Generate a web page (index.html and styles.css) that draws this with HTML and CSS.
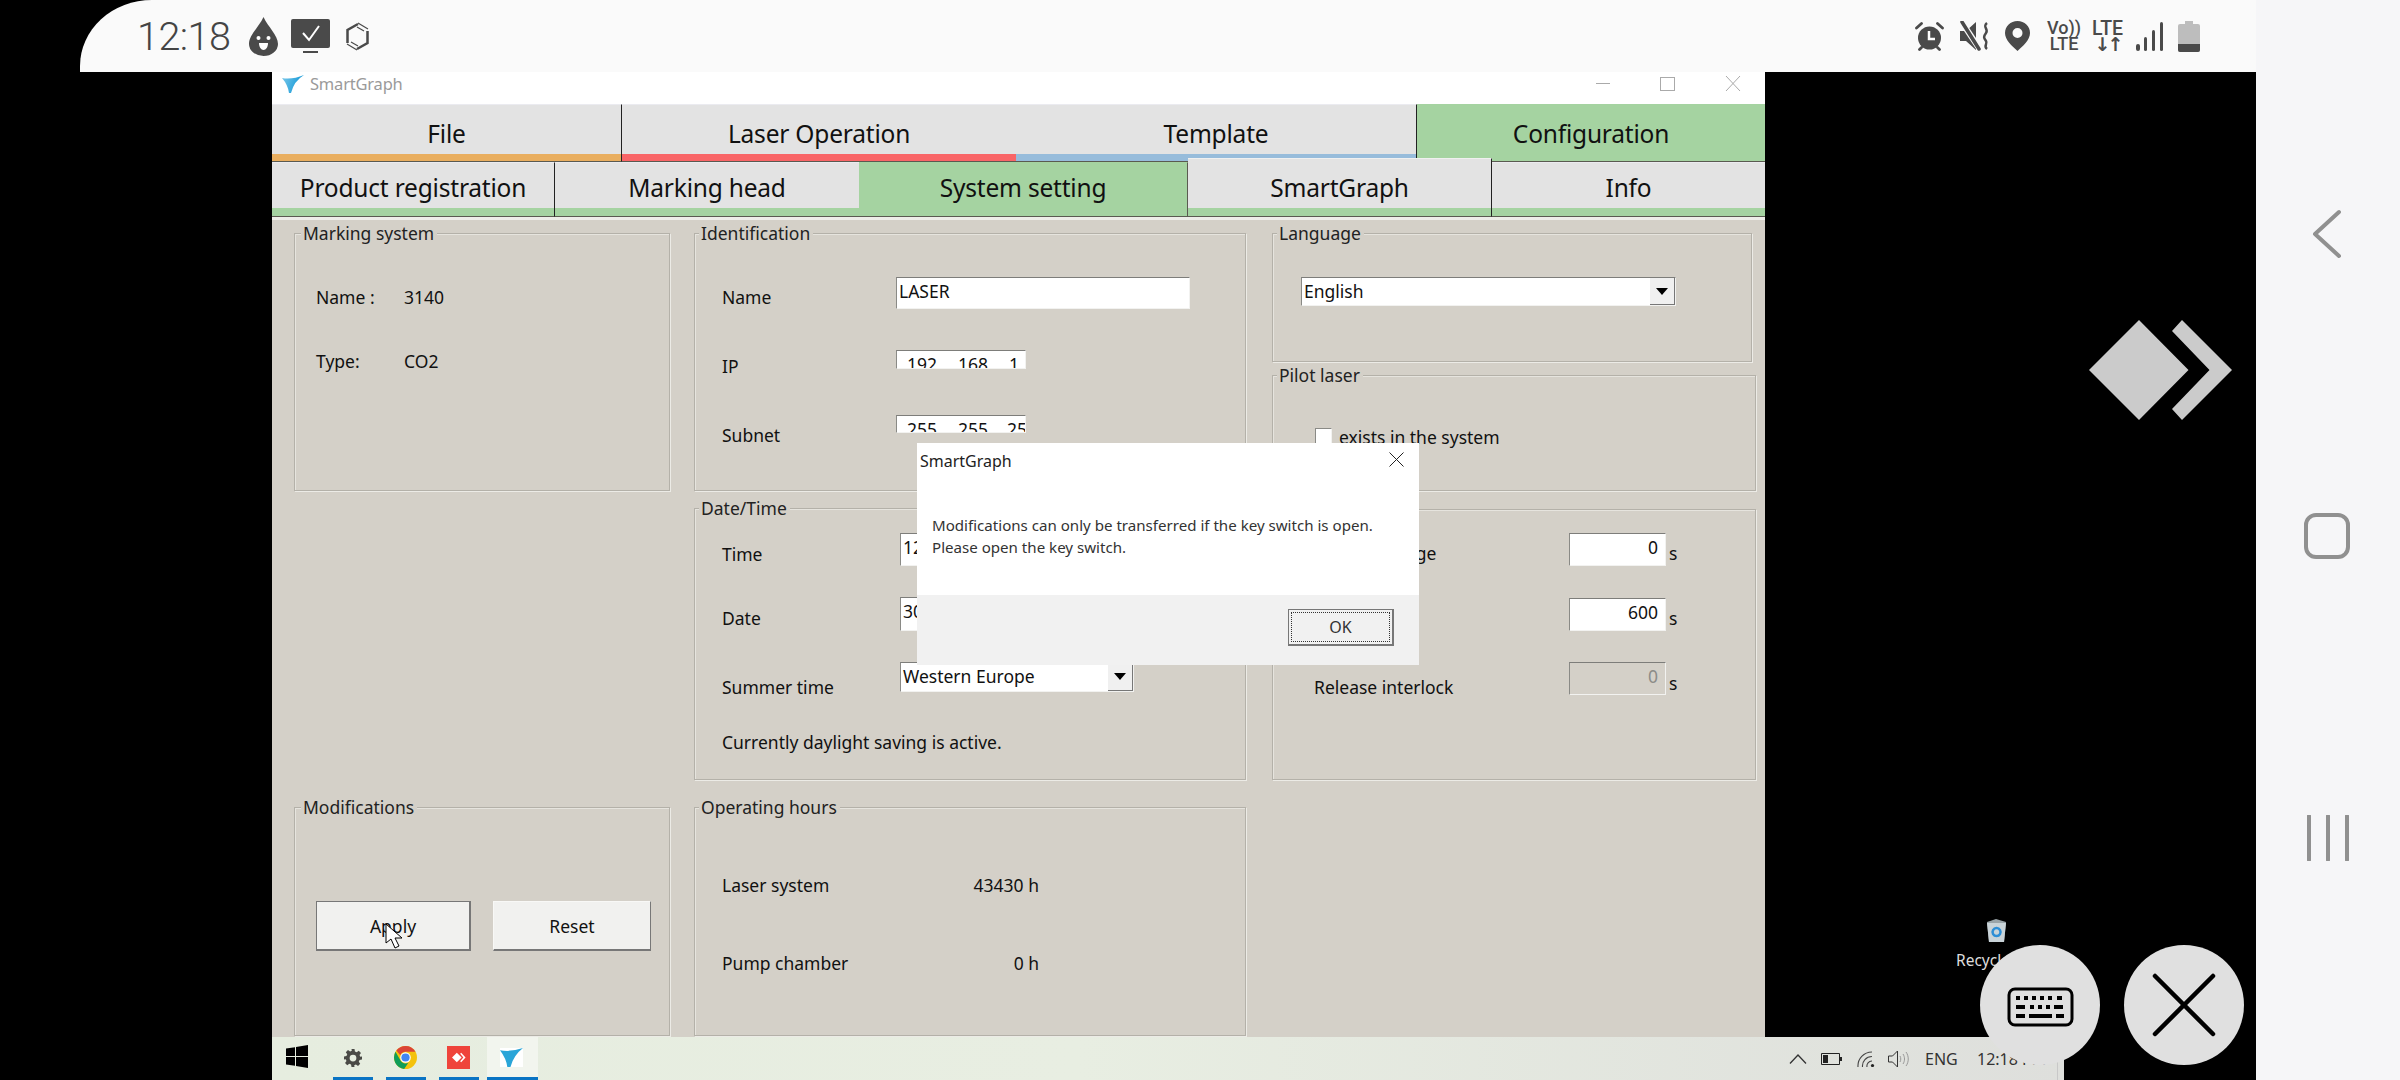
FILE: index.html
```html
<!DOCTYPE html>
<html lang="en">
<head>
<meta charset="utf-8">
<title>SmartGraph</title>
<link rel="stylesheet" href="styles.css">
</head>
<body>
<div class="screen">
  <div class="main">
    <header class="statusbar">
      <span class="clock">12:18</span>
      <svg class="si si-drop" viewBox="0 0 29 39"><path d="M14.5 0C19 10 29 18 29 27A14.5 12 0 0 1 0 27C0 18 10 10 14.5 0z" fill="#4a4a4a"/><circle cx="9.5" cy="21" r="2" fill="#fff"/><circle cx="19.5" cy="21" r="2" fill="#fff"/><path d="M10 26h9c0 4-2 7-4.500 7S10 30 10 26z" fill="#fff"/></svg>
      <svg class="si si-mon" viewBox="0 0 39 35"><rect width="39" height="29" rx="2" fill="#4a4a4a"/><path d="M12 14l6 7 10-14" fill="none" stroke="#fff" stroke-width="2"/><rect x="12" y="32" width="15" height="2" fill="#4a4a4a"/></svg>
      <svg class="si si-hex" viewBox="0 0 25 29"><g fill="none" stroke="#4a4a4a"><path d="M2.500 21V8L13 2" stroke-width="2.500"/><path d="M22.500 9V21L12 27" stroke-width="2.500"/><path d="M13 1l10 6M12 5l7 4M2 22l10 6M6 20l7 4" stroke-width="1.200"/></g></svg>
      <div class="status-right">
        <svg class="si si-alarm" viewBox="0 0 29 29"><circle cx="14.500" cy="16" r="11.500" fill="#4a4a4a"/><path d="M1.500 6l5-4.500M27.500 6l-5-4.500M4.500 27.500l2-2M24.500 27.500l-2-2" stroke="#4a4a4a" stroke-width="2.800" stroke-linecap="round"/><path d="M14 9v8h6" fill="none" stroke="#fff" stroke-width="2.500"/></svg>
        <svg class="si si-mute" viewBox="0 0 30 30"><path d="M0 10h6l10-9v28L6 20H0z" fill="#4a4a4a"/><path d="M1 0l20 30" stroke="#fafafa" stroke-width="6"/><path d="M2 1l17 27" stroke="#4a4a4a" stroke-width="3.500" stroke-linecap="round"/><path d="M27 2c-5 4 2 6-1 10s-2 5 0 8-3 5 1 8" fill="none" stroke="#4a4a4a" stroke-width="2.500"/></svg>
        <svg class="si si-pin" viewBox="0 0 25 30"><path fill-rule="evenodd" d="M12.500 0C19.500 0 25 5 25 12c0 7-7 13-12.500 18C7 25 0 19 0 12 0 5 5.500 0 12.500 0zM12.500 7a5 5 0 1 0 0 10 5 5 0 0 0 0-10z" fill="#4a4a4a"/></svg>
        <div class="net net-volte"><span>Vo))</span><span>LTE</span></div>
        <div class="net net-lte"><span>LTE</span><span class="arrows">↓↑</span></div>
        <svg class="si si-signal" viewBox="0 0 27 29"><g fill="#4a4a4a"><rect y="22" width="4" height="7" rx="2"/><rect x="8" y="15" width="3" height="14" rx="1.500"/><rect x="16" y="8" width="3" height="21" rx="1.500"/><rect x="24" y="0" width="3" height="29" rx="1.500"/></g></svg>
        <svg class="si si-batt" viewBox="0 0 22 31"><path d="M7 0h8v3h5a2 2 0 0 1 2 2v24a2 2 0 0 1-2 2H2a2 2 0 0 1-2-2V5a2 2 0 0 1 2-2h5z" fill="#bdbdbd"/><path d="M0 23h22v6a2 2 0 0 1-2 2H2a2 2 0 0 1-2-2z" fill="#4a4a4a"/></svg>
      </div>
    </header>

    <div class="desktop">
      <section class="window">
        <div class="titlebar">
          <svg class="app-icon" viewBox="0 0 22 18"><defs><linearGradient id="fun" x1="0" y1="0" x2="1" y2="0.300"><stop offset="0" stop-color="#7cc8ea"/><stop offset="1" stop-color="#0f97d6"/></linearGradient></defs><path d="M0 3Q10 5 22 0 12 6 9 18H7Q6 10 0 3z" fill="url(#fun)"/></svg>
          <span class="app-name">SmartGraph</span>
          <div class="win-controls">
            <span class="wc-min"></span>
            <span class="wc-max"></span>
            <svg class="wc-close" viewBox="0 0 16 15"><path d="M1 0l14 15M15 0L1 15" stroke="#aaa" stroke-width="1" fill="none"/></svg>
          </div>
        </div>

        <nav class="tabs tabs-top">
          <div class="tab tab-orange tab-sep">File</div>
          <div class="tab tab-red">Laser Operation</div>
          <div class="tab tab-blue tab-sep">Template</div>
          <div class="tab tab-on">Configuration</div>
        </nav>
        <nav class="tabs tabs-sub">
          <div class="tab tab-green tab-sep">Product registration</div>
          <div class="tab tab-green">Marking head</div>
          <div class="tab tab-on">System setting</div>
          <div class="tab tab-green tab-raised">SmartGraph</div>
          <div class="tab tab-green">Info</div>
        </nav>

        <div class="panes">
          <div class="col col-left">
            <div class="group g-marking">
              <span class="legend">Marking system</span>
              <div class="kv mt33"><span class="kv-k">Name :</span><span>3140</span></div>
              <div class="kv mt24"><span class="kv-k">Type:</span><span>CO2</span></div>
            </div>
            <div class="group g-mod">
              <span class="legend">Modifications</span>
              <div class="btn-row">
                <div class="btn btn-apply">Apply</div>
                <div class="btn btn-reset">Reset</div>
              </div>
            </div>
          </div>

          <div class="col col-mid">
            <div class="group g-ident">
              <span class="legend">Identification</span>
              <div class="row mt33"><span class="lbl lbl-a">Name</span><div class="field f-name">LASER</div></div>
              <div class="row mt29"><span class="lbl lbl-a">IP</span><div class="field f-ip off4"><span>192</span><span>168</span><span>1</span></div></div>
              <div class="row mt29"><span class="lbl lbl-a">Subnet</span><div class="field f-ip f-sub"><span>255</span><span>255</span><span>25</span></div></div>
            </div>
            <div class="group g-date">
              <span class="legend">Date/Time</span>
              <div class="row mt15"><span class="lbl lbl-b">Time</span><div class="field f-time offm1">12:18:00</div></div>
              <div class="row mt24"><span class="lbl lbl-b">Date</span><div class="field f-date offm1">30.08.2021</div></div>
              <div class="row mt29"><span class="lbl lbl-b">Summer time</span><div class="select s-summer offm5"><span class="sel-text">Western Europe</span><span class="sel-btn"></span></div></div>
              <div class="plain mt15">Currently daylight saving is active.</div>
            </div>
            <div class="group g-hours">
              <span class="legend">Operating hours</span>
              <div class="hours mt47"><span>Laser system</span><span>43430 h</span></div>
              <div class="hours mt38"><span>Pump chamber</span><span>0 h</span></div>
            </div>
          </div>

          <div class="col col-right">
            <div class="group g-lang">
              <span class="legend">Language</span>
              <div class="select s-lang mt33"><span class="sel-text">English</span><span class="sel-btn"></span></div>
            </div>
            <div class="group g-pilot">
              <span class="legend">Pilot laser</span>
              <div class="check mt31"><span class="box"></span><span>exists in the system</span></div>
            </div>
            <div class="group g-times">
              <span class="legend">Times</span>
              <div class="row mt13"><span class="lbl lbl-c">Laser recharge</span><div class="field f-num">0</div><span class="unit">s</span></div>
              <div class="row mt25"><span class="lbl lbl-c">Standby</span><div class="field f-num">600</div><span class="unit">s</span></div>
              <div class="row mt29"><span class="lbl lbl-c">Release interlock</span><div class="field f-num f-off offm5">0</div><span class="unit offm4">s</span></div>
            </div>
          </div>
        </div>

        <svg class="pointer" viewBox="0 0 18 26"><path d="M1 1v19l5-4 4 9 4-2-4-8h7z" fill="#fff" stroke="#000" stroke-width="1"/></svg>
      </section>

      <footer class="taskbar">
        <div class="start">
          <svg class="tb-win" viewBox="0 0 22 23"><path d="M0 3.500l9-1.300V11H0zM10 2l12-2v11H10zM0 12h9v8.800l-9-1.300zM10 12h12v11l-12-2z" fill="#000"/></svg>
        </div>
        <div class="tile t-gear">
          <svg class="tb-ic18" viewBox="0 0 24 24"><path fill="#4a4a46" fill-rule="evenodd" d="M10 0h4l.6 3.300 2.300 1 2.800-1.900 2.900 2.900-1.900 2.800 1 2.300L24 10v4l-3.300.6-1 2.300 1.900 2.800-2.900 2.900-2.800-1.900-2.300 1L14 24h-4l-.6-3.300-2.300-1-2.800 1.900-2.900-2.900 1.900-2.800-1-2.300L0 14v-4l3.300-.6 1-2.300-1.900-2.800 2.900-2.900 2.800 1.900 2.300-1zM12 7.500a4.500 4.500 0 1 0 0 9 4.500 4.500 0 0 0 0-9z"/></svg>
        </div>
        <div class="tile t-chrome">
          <svg class="tb-ic23" viewBox="0 0 24 24"><circle cx="12" cy="12" r="12" fill="#f4c20d"/><path d="M12 0a12 12 0 0 1 10.400 6H12a6 6 0 0 0-5.500 3.700L2.500 4.800A12 12 0 0 1 12 0z" fill="#db4437"/><path d="M1.600 6a12 12 0 0 0 9 17.900l4.400-6.300a6 6 0 0 1-8.200-2.600z" fill="#0f9d58"/><circle cx="12" cy="12" r="5.500" fill="#fff"/><circle cx="12" cy="12" r="4.300" fill="#4285f4"/></svg>
        </div>
        <div class="tile t-any">
          <span class="any-square"><svg class="tb-ic14" viewBox="0 0 16 12"><path d="M5.500 0.500L11 6l-5.500 5.500L0 6zM10.500.5l5 5.500-5 5.500-1.200-1.200L13 6 9.300 1.700z" fill="#fff"/></svg></span>
        </div>
        <div class="tile t-sg">
          <span class="sg-paper"><svg class="tb-sg" viewBox="0 0 22 18"><path d="M0 2Q10 4 22 0 13 7 10 18H7Q6 10 0 2z" fill="#2aa5d8"/></svg></span>
        </div>
        <div class="tray">
          <svg class="tr-up" viewBox="0 0 18 10"><path d="M1 9.500L9 1l8 8.500" fill="none" stroke="#333" stroke-width="1.300"/></svg>
          <svg class="tr-batt" viewBox="0 0 21 12"><path d="M.5.500h18v11H.5z" fill="none" stroke="#222"/><rect x="19" y="4" width="2" height="4" fill="#222"/><rect x="2" y="2" width="5" height="8" fill="#222"/></svg>
          <svg class="tr-wifi" viewBox="0 0 18 17"><path d="M1 17A14 14 0 0 1 15 2M5.500 17A9.500 9.500 0 0 1 15 6.500M10 17A5 5 0 0 1 15 11" fill="none" stroke="#444" stroke-width="1.100"/><circle cx="15.500" cy="15.500" r="1.600" fill="#222"/></svg>
          <svg class="tr-vol" viewBox="0 0 22 18"><path d="M.5 6h4l5-5v16l-5-5h-4z" fill="none" stroke="#333"/><path d="M12 6c1 2 1 4 0 6M15 4c2 3 2 7 0 10M18 2c3 4 3 10 0 14" fill="none" stroke="#999"/></svg>
          <span class="tr-lang">ENG</span>
          <span class="tr-time">12:18 PM</span>
          <span class="tr-show"></span>
        </div>
      </footer>

      <div class="recycle">
        <svg class="bin" viewBox="0 0 21 24"><path d="M1 3l9-3 10 3-2 20H3z" fill="#9aa4a8"/><path d="M1 4l19 0-2 19H3z" fill="#c9d3d8"/><path d="M10.500 9a4 4 0 1 0 .1 0z" fill="none" stroke="#2d8ed6" stroke-width="2.500"/></svg>
        <span>Recycle Bin</span>
      </div>

      <svg class="any-logo" viewBox="0 0 144 100"><path d="M50 0l49.500 50L50 100 0 50zM93 0l50 50-50 50-10-11 37.500-39L83 11z" fill="#cbcbcb"/></svg>

      <div class="fab fab-kb">
        <svg class="kb" viewBox="0 0 67 40">
          <rect x="2" y="2" width="63" height="36" rx="6" fill="none" stroke="#000" stroke-width="3"/>
          <g fill="#000">
            <rect x="9" y="9" width="4" height="4"/><rect x="17" y="9" width="4" height="4"/><rect x="25" y="9" width="4" height="4"/><rect x="33" y="9" width="4" height="4"/><rect x="41" y="9" width="4" height="4"/><rect x="50" y="9" width="5" height="4"/>
            <rect x="9" y="18" width="9" height="4"/><rect x="23" y="18" width="4" height="4"/><rect x="31" y="18" width="4" height="4"/><rect x="39" y="18" width="4" height="4"/><rect x="47" y="18" width="9" height="4"/>
            <rect x="9" y="27" width="9" height="4"/><rect x="22" y="27" width="23" height="4"/><rect x="49" y="27" width="8" height="4"/>
          </g>
        </svg>
      </div>
      <div class="fab fab-x">
        <svg class="xmark" viewBox="0 0 64 64"><path d="M3 3l58 58M61 3L3 61" stroke="#000" stroke-width="4.500" stroke-linecap="round"/></svg>
      </div>

      <div class="dialog">
        <div class="dlg-head">
          <span>SmartGraph</span>
          <svg class="dlg-close" viewBox="0 0 15 15"><path d="M.5.500l14 14M14.500.500l-14 14" stroke="#222" stroke-width="1" fill="none"/></svg>
        </div>
        <div class="dlg-msg">Modifications can only be transferred if the key switch is open.<br>Please open the key switch.</div>
        <div class="dlg-foot"><div class="dlg-ok"><span>OK</span></div></div>
      </div>
    </div>
  </div>

  <aside class="navbar">
    <svg class="nav-back" viewBox="0 0 30 50"><path d="M27 3L3 25l24 22" fill="none" stroke="#909090" stroke-width="4" stroke-linecap="round" stroke-linejoin="round"/></svg>
    <span class="nav-home"></span>
    <svg class="nav-recent" viewBox="0 0 44 46"><path d="M3 1v44M22 1v44M41 1v44" stroke="#909090" stroke-width="4" stroke-linecap="round"/></svg>
  </aside>
</div>
</body>
</html>
```

FILE: styles.css
```css
* { box-sizing: border-box; }
html, body { margin: 0; padding: 0; background: #000; }
body { font-family: "Noto Sans", "Open Sans", sans-serif; font-size: 18px; color: #111; }

.screen { width: 2400px; height: 1080px; display: grid; grid-template-columns: 2256px 144px; background: #000; overflow: hidden; }
.main { display: flex; flex-direction: column; height: 1080px; }

/* Android status bar */
.statusbar { height: 72px; margin-left: 80px; background: #fafafa; border-top-left-radius: 72px 66px; display: flex; align-items: center; padding-left: 57px; color: #4a4a4a; }
.clock { font-family: Roboto, sans-serif; font-weight: 300; font-size: 39.500px; width: 112px; letter-spacing: -0.5px; color: #444; }
.si { display: block; flex: none; }
.si-drop { width: 29px; height: 39px; margin-right: 13px; }
.si-mon { width: 39px; height: 35px; margin-right: 15px; }
.si-hex { width: 25px; height: 29px; }
.status-right { margin-left: auto; display: flex; align-items: center; padding-right: 56px; }
.si-alarm { width: 29px; height: 29px; margin-right: 16px; }
.si-mute { width: 30px; height: 30px; margin-right: 15px; }
.si-pin { width: 25px; height: 30px; margin-right: 18px; }
.net { display: flex; flex-direction: column; align-items: center; font-family: Roboto, sans-serif; font-weight: 500; font-size: 18px; line-height: 16px; color: #4a4a4a; }
.net-volte { width: 32px; margin-right: 11px; }
.net-lte { width: 33px; margin-right: 12px; font-size: 19.500px; }
.arrows { font-size: 19px; line-height: 14px; font-family: "DejaVu Sans", sans-serif; font-weight: 700; letter-spacing: -3px; }
.si-signal { width: 27px; height: 29px; margin-right: 15px; }
.si-batt { width: 22px; height: 31px; }

/* Android nav bar */
.navbar { background: #f6f6f8; display: flex; flex-direction: column; align-items: center; padding-top: 209px; }
.nav-back { width: 30px; height: 50px; margin-left: -3px; }
.nav-home { width: 46px; height: 46px; border: 4px solid #909090; border-radius: 12px; margin-top: 254px; margin-left: -2px; }
.nav-recent { width: 44px; height: 46px; margin-top: 256px; }

/* Desktop canvas */
.desktop { flex: 1; position: relative; display: flex; flex-direction: column; }

.window { position: relative; margin-left: 272px; width: 1493px; height: 965px; display: flex; flex-direction: column; background: #d4d0c8; }
.titlebar { height: 32px; flex: none; background: #fff; display: flex; align-items: center; padding: 0 0 9px 10px; }
.app-icon { width: 22px; height: 18px; margin-right: 6px; }
.app-name { font-size: 16.500px; color: #9a9a9a; letter-spacing: -0.2px; }
.win-controls { margin-left: auto; display: flex; align-items: center; padding-right: 24px; }
.wc-min { width: 14px; height: 1px; background: #aaa; }
.wc-max { width: 15px; height: 14px; border: 1px solid #aaa; margin-left: 50px; }
.wc-close { width: 16px; height: 15px; margin-left: 50px; }

.tabs { display: grid; flex: none; background: #e3e3e3; }
.tabs-top { grid-template-columns: 350px 394px 401px 348px; height: 58px; }
.tabs-sub { grid-template-columns: 283px 304px 329px 304px 273px; height: 58px; border-bottom: 3px solid #eeeee8; }
.tab { display: flex; align-items: center; justify-content: center; background: #e3e3e3; color: #111; font-size: 24.500px; border-top: 1px solid #ebebf0; border-bottom: 1px solid #5a5a50; letter-spacing: -0.2px; }
.tabs-top .tab { padding-top: 4px; padding-bottom: 3px; box-shadow: inset 0 -7px 0 var(--strip); }
.tabs-sub .tab { padding-bottom: 5px; box-shadow: inset 0 -8px 0 var(--strip); }
.tab-orange { --strip: #e9ae5f; }
.tab-red { --strip: #f96567; }
.tab-blue { --strip: #97bcdb; }
.tab-green { --strip: #a5d3a1; }
.tab-on { --strip: #a5d3a1; background: #a5d3a1; border-top-color: #a5d3a1; }
.tab-sep { border-right: 1px solid #222; }
.tabs-sub .tab-on { border-right: 1px solid #5a5a50; }
.tabs-sub .tab-raised { margin-top: -4px; padding-top: 4px; position: relative; border-right: 1px solid #222; border-top-color: #f0f0f0; }

.panes { flex: 1; min-height: 0; display: grid; grid-template-columns: 376px 552px 486px; column-gap: 24px; padding: 13px 0 1px 22px; background: #d4d0c8; }
.col-right { margin-left: 2px; }
.col { display: flex; flex-direction: column; }
.col-left { justify-content: space-between; }

.group { border: 1px solid #b4b1a9; box-shadow: 1px 1px 0 #ecebe6, inset 1px 1px 0 #e6e4de; padding: 0 21px; flex: none; }
.legend { display: block; width: fit-content; margin: -12px 0 0 -15px; padding: 0 3px 0 2px; background: #d4d0c8; font-size: 17.500px; line-height: 22px; color: #222; position: relative; }
.g-marking { height: 258px; }
.g-mod { height: 229px; }
.g-ident { height: 258px; padding-left: 27px; }
.g-date { height: 272px; margin-top: 17px; padding-left: 27px; }
.g-hours { height: 229px; margin-top: 27px; padding-left: 27px; }
.g-lang { height: 129px; width: 480px; padding-left: 28px; }
.g-pilot { height: 116px; margin-top: 13px; padding-left: 28px; }
.g-times { height: 271px; margin-top: 18px; padding-left: 41px; }
.g-ident .legend, .g-date .legend, .g-hours .legend { margin-left: -23px; }
.g-lang .legend, .g-pilot .legend { margin-left: -24px; }
.g-times .legend { margin-left: -37px; }

.mt13 { margin-top: 13px; } .mt15 { margin-top: 15px; } .mt24 { margin-top: 24px; } .mt25 { margin-top: 25px; }
.mt29 { margin-top: 29px; } .mt31 { margin-top: 31px; } .mt33 { margin-top: 33px; } .mt38 { margin-top: 38px; } .mt47 { margin-top: 47px; }
.off4 { margin-top: 4px; } .offm1 { margin-top: -1px; } .offm4 { margin-top: -4px; } .offm5 { margin-top: -5px; }

.kv { display: flex; height: 40px; line-height: 40px; font-size: 17.500px; }
.kv-k { width: 88px; }
.row { display: flex; align-items: flex-start; height: 40px; font-size: 17.500px; }
.lbl { line-height: 40px; flex: none; }
.lbl-a { width: 174px; }
.lbl-b { width: 178px; }
.lbl-c { width: 255px; white-space: nowrap; }
.plain { line-height: 40px; font-size: 17.500px; }

.field { background: #fff; border: 1px solid #f2f2f0; border-top-color: #7d7d7a; border-left-color: #8a8a86; line-height: 26px; padding: 0 0 0 2px; overflow: hidden; flex: none; }
.f-name { width: 294px; height: 32px; }
.f-ip { width: 130px; height: 19px; display: flex; padding-left: 10px; }
.f-ip span { width: 51px; flex: none; }
.f-sub { height: 18px; }
.f-sub span:nth-child(2) { width: 49px; }
.f-time { width: 130px; height: 33px; }
.f-date { width: 130px; height: 34px; }
.f-num { width: 97px; height: 33px; text-align: right; padding-right: 7px; }
.f-off { background: #d4d0c8; color: #8c8c88; }
.unit { margin-left: 3px; line-height: 40px; }

.select { display: flex; background: #fff; border: 1px solid #f2f2f0; border-top-color: #7d7d7a; border-left-color: #8a8a86; flex: none; }
.s-lang { width: 375px; height: 29px; }
.s-summer { width: 234px; height: 30px; }
.sel-text { flex: 1; line-height: 27px; padding-left: 2px; font-size: 17.500px; }
.sel-btn { width: 25px; background: #f0f0f0; border-right: 1px solid #777; border-bottom: 1px solid #777; display: flex; align-items: center; justify-content: center; }
.sel-btn::before { content: ""; border: 6px solid transparent; border-top: 7px solid #000; border-bottom: 0; }

.check { display: flex; align-items: center; height: 40px; font-size: 17.500px; margin-left: 14px; }
.box { width: 17px; height: 19px; background: #fff; border: 1px solid #f2f2f0; border-top-color: #8a8a86; border-left-color: #8a8a86; margin-right: 7px; }

.hours { width: 317px; height: 40px; line-height: 40px; display: flex; justify-content: space-between; font-size: 17.500px; }

.btn-row { display: flex; gap: 22px; margin-top: 83px; }
.btn { height: 50px; flex: none; display: flex; align-items: center; justify-content: center; background: #f1f1ef; font-size: 17.500px; border: 1px solid #f8f8f6; border-right-color: #777; border-bottom: 2px solid #777; }
.btn-apply { width: 155px; border-color: #777; border-width: 1px 2px 2px 1px; }
.btn-reset { width: 158px; }
.pointer { position: absolute; left: 113px; top: 851px; width: 18px; height: 26px; }

/* Windows taskbar */
.taskbar { margin-left: 272px; width: 1792px; height: 43px; flex: none; display: flex; background: linear-gradient(90deg, #e6eddf 0%, #e8eee2 45%, #dedfdc 100%); }
.start { width: 61px; display: flex; align-items: center; padding: 0 0 4px 14px; }
.tb-win { width: 22px; height: 23px; }
.tile { height: 43px; border-bottom: 3px solid #0a74c4; display: flex; align-items: center; justify-content: center; flex: none; }
.t-gear, .t-chrome { width: 40px; margin-right: 13px; padding-right: 1px; }
.t-any { width: 40px; margin-right: 8px; padding-right: 1px; }
.t-sg { width: 51px; background: #f2f5ee; padding-right: 3px; }
.tb-ic18 { width: 18px; height: 18px; margin-top: 1px; }
.tb-ic23 { width: 23px; height: 23px; margin-top: 1px; }
.sg-paper { width: 23px; height: 19px; background: #fff; display: flex; align-items: center; justify-content: center; }
.tb-sg { width: 23px; height: 19px; }
.any-square { width: 23px; height: 23px; background: #ef443b; display: flex; align-items: center; justify-content: center; margin-top: 1px; }
.tb-ic14 { width: 14px; height: 11px; }
.tray { margin-left: auto; display: flex; align-items: center; font-size: 16.500px; color: #333; }
.tr-up { width: 18px; height: 10px; margin-right: 14px; }
.tr-batt { width: 21px; height: 12px; margin-right: 15px; }
.tr-wifi { width: 18px; height: 17px; margin-right: 13px; }
.tr-vol { width: 22px; height: 18px; margin-right: 15px; }
.tr-lang { width: 32px; margin-right: 20px; font-size: 16px; }
.tr-time { width: 80px; white-space: nowrap; font-size: 16px; }
.tr-show { width: 7px; height: 43px; border-left: 1px solid #c8c8c8; }

/* Overlays on the desktop */
.recycle { position: absolute; left: 1950px; top: 847px; width: 90px; display: flex; flex-direction: column; align-items: flex-start; color: #ddd; font-size: 15.500px; line-height: 20px; }
.bin { width: 21px; height: 24px; margin: 0 0 7px 36px; }
.recycle span { padding-left: 6px; white-space: nowrap; }
.any-logo { position: absolute; left: 2089px; top: 248px; width: 144px; height: 100px; }
.fab { position: absolute; top: 873px; width: 120px; height: 120px; border-radius: 50%; background: #e0e0e0; display: flex; align-items: center; justify-content: center; }
.fab-kb { left: 1980px; }
.fab-x { left: 2124px; }
.kb { width: 67px; height: 40px; margin-top: 4px; }
.xmark { width: 64px; height: 64px; }

.dialog { position: absolute; left: 917px; top: 371px; width: 502px; height: 222px; background: #fff; display: flex; flex-direction: column; }
.dlg-head { height: 36px; flex: none; display: flex; align-items: center; justify-content: space-between; padding: 0 15px 0 3px; font-size: 16px; color: #222; }
.dlg-close { width: 15px; height: 15px; margin-top: -3px; }
.dlg-msg { flex: 1; padding: 35px 0 0 15px; font-size: 15.100px; line-height: 22px; color: #333; white-space: nowrap; }
.dlg-foot { height: 70px; flex: none; background: #f1f1f1; display: flex; justify-content: flex-end; padding: 14px 25px 0 0; }
.dlg-ok { width: 106px; height: 37px; background: #f1f1f1; border: 1px solid #777; border-width: 1px 2px 2px 1px; padding: 2px; font-size: 16px; color: #333; }
.dlg-ok span { display: flex; align-items: center; justify-content: center; height: 100%; border: 1px dotted #333; }
```
